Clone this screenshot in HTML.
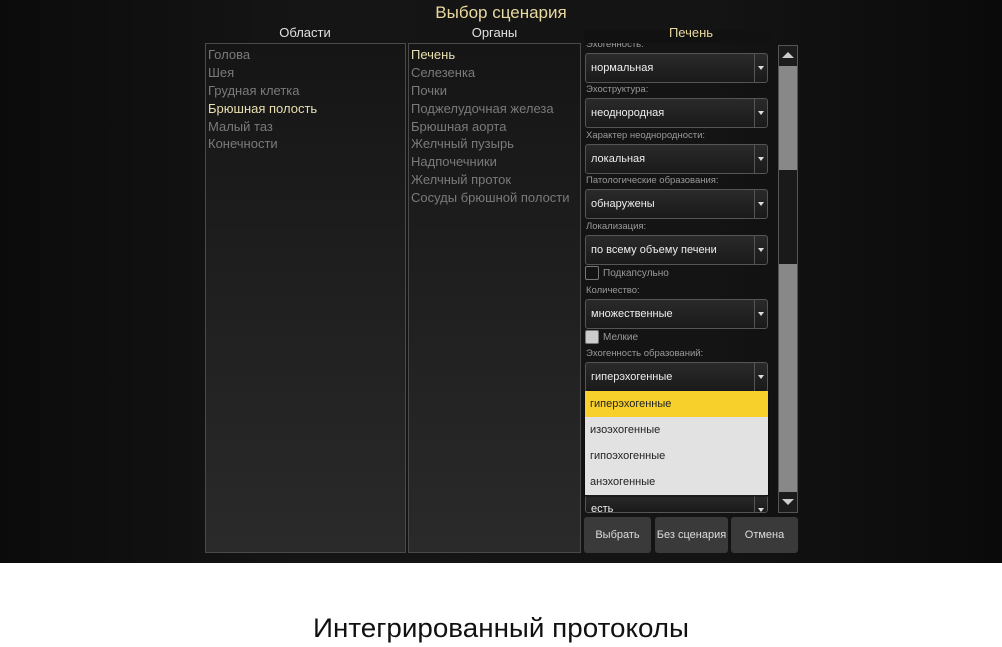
<!DOCTYPE html>
<html><head><meta charset="utf-8"><style>
*{margin:0;padding:0;box-sizing:border-box}
body{width:1002px;height:647px;background:#fff;position:relative;overflow:hidden;font-family:"Liberation Sans",sans-serif}
.dark{position:absolute;left:0;top:0;width:1002px;height:563px;background:linear-gradient(90deg,#0b0b0b,#151515 30%,#141414 70%,#0a0a0a)}
.a{position:absolute}
.title{left:0;width:1002px;top:3px;text-align:center;color:#e8d9a0;font-size:17px}
.hdr{color:#e0e0e0;font-size:13px;text-align:center}
.box{border:1px solid #4a4a4a;background:linear-gradient(#151515,#2a2a2a)}
.list div{font-size:13px;color:#7a7a7a;height:17.9px;line-height:18px;padding-left:2px}
.list .sel{color:#eadfb0}
.lbl{font-size:9.5px;color:#9a9a9a;left:586px}
.dd{left:585px;width:183px;height:30px;border:1px solid #555;border-radius:3px;background:linear-gradient(#2a2a2a,#1a1a1a);color:#eee;font-size:11px;line-height:28px;padding-left:5px}
.dd:after{content:"";position:absolute;right:12px;top:0;width:1px;height:28px;background:#555}
.dd:before{content:"";position:absolute;right:3px;top:12px;border-left:3.5px solid transparent;border-right:3.5px solid transparent;border-top:4px solid #ddd}
.cb{width:14px;height:14px;border:1px solid #777;border-radius:2px;left:585px}
.opt{left:585px;width:183px;height:26px;line-height:26px;padding-left:5px;font-size:11px;color:#222;background:#e2e2e2}
.btn{top:517px;height:36px;background:#3a3a3a;border-radius:3px;color:#ddd;font-size:11px;text-align:center;line-height:36px}
</style></head><body>
<div class="dark"></div>
<div class="a lbl" style="top:39px">Эхогенность:</div>
<div class="a" style="left:584px;top:30px;width:186px;height:13px;background:#111"></div>
<div class="a title">Выбор сценария</div>
<div class="a hdr" style="left:205px;width:200px;top:25px">Области</div>
<div class="a hdr" style="left:408px;width:173px;top:25px">Органы</div>
<div class="a hdr" style="left:584px;width:214px;top:25px;color:#e8d9a0">Печень</div>
<div class="a box list" style="left:205px;top:43px;width:201px;height:510px;padding-top:2px">
<div>Голова</div><div>Шея</div><div>Грудная клетка</div><div class="sel">Брюшная полость</div><div>Малый таз</div><div>Конечности</div></div>
<div class="a box list" style="left:408px;top:43px;width:173px;height:510px;padding-top:2px">
<div class="sel">Печень</div><div>Селезенка</div><div>Почки</div><div>Поджелудочная железа</div><div>Брюшная аорта</div><div>Желчный пузырь</div><div>Надпочечники</div><div>Желчный проток</div><div>Сосуды брюшной полости</div></div>
<div class="a dd" style="top:53px">нормальная</div>
<div class="a lbl" style="top:84px">Эхоструктура:</div>
<div class="a dd" style="top:98px">неоднородная</div>
<div class="a lbl" style="top:130px">Характер неоднородности:</div>
<div class="a dd" style="top:144px">локальная</div>
<div class="a lbl" style="top:175px">Патологические образования:</div>
<div class="a dd" style="top:189px">обнаружены</div>
<div class="a lbl" style="top:221px">Локализация:</div>
<div class="a dd" style="top:235px">по всему объему печени</div>
<div class="a cb" style="top:266px"></div>
<div class="a lbl" style="top:268px;left:603px;font-size:10px">Подкапсульно</div>
<div class="a lbl" style="top:285px">Количество:</div>
<div class="a dd" style="top:299px">множественные</div>
<div class="a cb" style="top:330px;background:#ccc"></div>
<div class="a lbl" style="top:332px;left:603px;font-size:10px">Мелкие</div>
<div class="a lbl" style="top:348px">Эхогенность образований:</div>
<div class="a dd" style="top:362px">гиперэхогенные</div>
<div class="a dd" style="top:495px;height:18px;line-height:26px;overflow:hidden">есть</div>
<div class="a" style="left:585px;top:391px;width:183px;height:104px;background:#e2e2e2;box-shadow:0 1px 2px #000"></div>
<div class="a opt" style="top:391px;background:#f7d02c">гиперэхогенные</div>
<div class="a opt" style="top:417px">изоэхогенные</div>
<div class="a opt" style="top:443px">гипоэхогенные</div>
<div class="a opt" style="top:469px">анэхогенные</div>
<div class="a" style="left:778px;top:45px;width:20px;height:468px;background:#888;border:1px solid #555"></div>
<div class="a" style="left:779px;top:46px;width:18px;height:20px;background:#1c1c1c"></div>
<div class="a" style="left:782px;top:52px;border-left:6px solid transparent;border-right:6px solid transparent;border-bottom:6px solid #ccc"></div>
<div class="a" style="left:779px;top:170px;width:18px;height:94px;background:#1a1a1a"></div>
<div class="a" style="left:779px;top:492px;width:18px;height:20px;background:#1c1c1c"></div>
<div class="a" style="left:782px;top:499px;border-left:6px solid transparent;border-right:6px solid transparent;border-top:6px solid #ccc"></div>
<div class="a btn" style="left:584px;width:67px">Выбрать</div>
<div class="a btn" style="left:655px;width:73px">Без сценария</div>
<div class="a btn" style="left:731px;width:67px">Отмена</div>
<div class="a" style="left:0;width:1002px;top:613px;text-align:center;font-size:27px;color:#111;transform:scaleX(1.03)">Интегрированный протоколы</div>
</body></html>
